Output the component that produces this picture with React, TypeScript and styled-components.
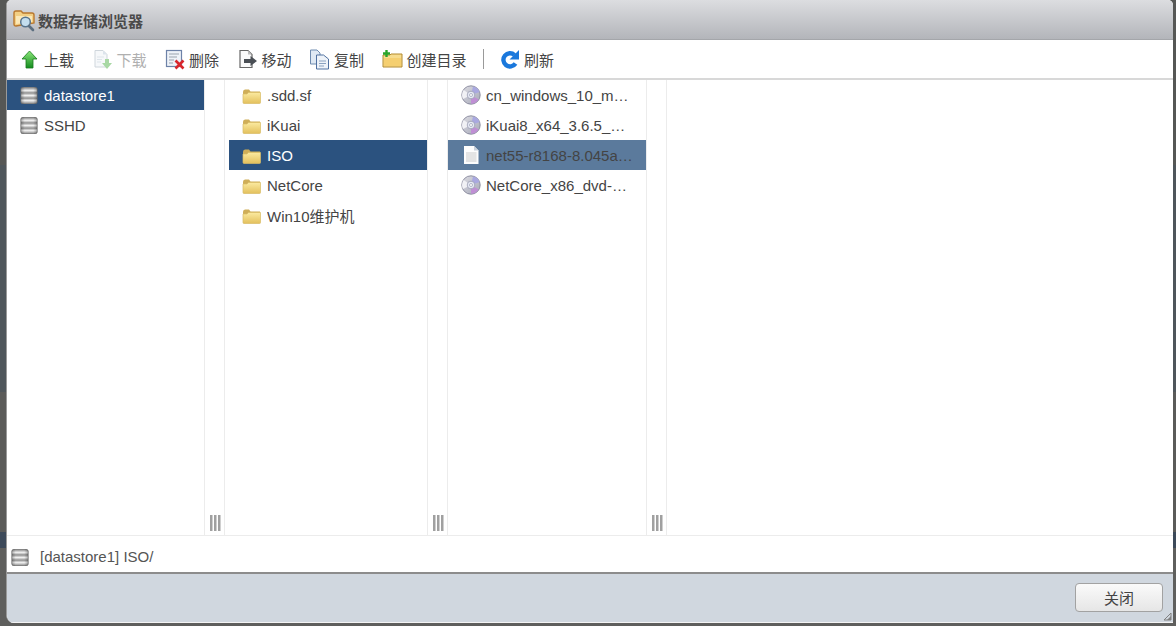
import styled, { createGlobalStyle } from 'styled-components'

const GlobalStyle = createGlobalStyle`
    html, body {
        margin: 0;
        padding: 0;
        height: 100%;
        overflow: hidden;
    }
    body {
        font-family: "Liberation Sans", "Noto Sans CJK SC", sans-serif;
        font-size: 15px;
        color: #444;
        background: linear-gradient(
            to bottom,
            #565755 0, #565755 165px,
            #4f565b 165px, #4f565b 392px,
            #5b5b59 392px, #5b5b59 532px,
            #3d4a5a 532px, #3d4a5a 548px,
            #5f5f5d 548px, #5f5f5d 100%
        );
    }
`

const Page = styled.div`
    box-sizing: border-box;
    height: 626px;
    padding: 0 3px 3px 6px;
    display: flex;
`

const Dialog = styled.div`
    flex: 1;
    min-width: 0;
    display: flex;
    flex-direction: column;
    background: #fff;
    border-left: 1px solid #9a9a9a;
    border-radius: 5px 5px 0 8px;
    overflow: hidden;
`

const Header = styled.div`
    height: 39px;
    flex: none;
    display: flex;
    align-items: center;
    gap: 2px;
    padding-left: 6px;
    background: linear-gradient(to bottom, #dcdde0, #b3b5ba);
    border-bottom: 1px solid #a4a6aa;
`

const Title = styled.span`
    font-size: 15px;
    font-weight: bold;
    color: #4a4a4a;
    position: relative;
    top: 1px;
`

const Toolbar = styled.div`
    height: 38px;
    flex: none;
    display: flex;
    align-items: center;
    gap: 17.5px;
    padding-left: 12px;
    border-bottom: 2px solid #d8d8d8;
`

const Tool = styled.div<{ $disabled?: boolean }>`
    display: flex;
    align-items: center;
    gap: 4px;
    color: ${(p) => (p.$disabled ? '#b0b0b0' : '#444')};
    white-space: nowrap;
`

const ToolIcon = styled.svg`
    width: 21px;
    height: 21px;
    flex: none;
    display: block;
`

const Separator = styled.div`
    width: 1px;
    height: 20px;
    background: #9a9a9a;
    margin: 0 -2px 0 -1.5px;
`

const Browser = styled.div`
    flex: 1;
    min-height: 0;
    display: flex;
    border-bottom: 1px solid #ececec;
`

const Column = styled.div<{ $width: number; $inset?: number }>`
    width: ${(p) => p.$width}px;
    flex: none;
    box-sizing: border-box;
    padding-left: ${(p) => p.$inset ?? 0}px;
`

const Row = styled.div<{ $state?: 'active' | 'muted'; $file?: boolean }>`
    height: 30px;
    display: flex;
    align-items: center;
    gap: 5px;
    padding-left: ${(p) => (p.$file ? 13 : 12)}px;
    padding-right: 12px;
    color: ${(p) => (p.$state === 'active' ? '#fff' : '#444')};
    background: ${(p) =>
        p.$state === 'active' ? '#2b527f' : p.$state === 'muted' ? '#5b7a9c' : 'transparent'};
`

const RowText = styled.span`
    flex: 1;
    min-width: 0;
    overflow: hidden;
    white-space: nowrap;
    text-overflow: ellipsis;
`

const RowIcon = styled.svg`
    width: 20px;
    height: 20px;
    flex: none;
    display: block;
`

const Gutter = styled.div`
    width: 19px;
    flex: none;
    display: flex;
    align-items: flex-end;
    justify-content: center;
    gap: 2px;
    padding-bottom: 4px;
    border-left: 1px solid #ececec;
    border-right: 1px solid #ececec;
`

const GripBar = styled.span`
    width: 2px;
    height: 16px;
    background: #a0a0a0;
    box-shadow: 1px 0 0 #cfcfcf;
`

const Rest = styled.div`
    flex: 1;
`

const PathBar = styled.div`
    height: 36px;
    flex: none;
    box-sizing: border-box;
    padding: 5px 0 0 3px;
    display: flex;
    align-items: center;
    gap: 10px;
    color: #555;
`

const Footer = styled.div`
    height: 47px;
    flex: none;
    position: relative;
    display: flex;
    align-items: center;
    justify-content: flex-end;
    padding: 0 10px 1px 0;
    background: #d0d7df;
    border-top: 2px solid #8c8c8c;
    border-bottom: 1px solid #f4f4f4;
`

const CloseButton = styled.button`
    width: 88px;
    height: 29px;
    box-sizing: border-box;
    font: inherit;
    font-size: 15px;
    color: #444;
    background: linear-gradient(to bottom, #fafafa, #e6e6e6);
    border: 1px solid #a2a2a2;
    border-radius: 4px;
    padding: 0;
`

const ResizeGrip = styled.svg`
    position: absolute;
    right: 1px;
    bottom: 1px;
    width: 9px;
    height: 9px;
`

function DiskIcon() {
    return (
        <RowIcon viewBox="0 0 20 20">
            <defs>
                <linearGradient id="diskBand" x1="0" y1="0" x2="0" y2="1">
                    <stop offset="0" stopColor="#9a9a9a" />
                    <stop offset="0.5" stopColor="#f0f0f0" />
                    <stop offset="1" stopColor="#a0a0a0" />
                </linearGradient>
                <linearGradient id="diskSide" x1="0" y1="0" x2="1" y2="0">
                    <stop offset="0" stopColor="#000" stopOpacity="0.28" />
                    <stop offset="0.25" stopColor="#000" stopOpacity="0" />
                    <stop offset="0.75" stopColor="#000" stopOpacity="0" />
                    <stop offset="1" stopColor="#000" stopOpacity="0.28" />
                </linearGradient>
            </defs>
            <rect x="1.5" y="2" width="17" height="17" rx="2.5" fill="#858585" />
            <rect x="2.2" y="3" width="15.6" height="4.8" rx="1" fill="url(#diskBand)" />
            <rect x="2.2" y="8.1" width="15.6" height="4.8" fill="url(#diskBand)" />
            <rect x="2.2" y="13.2" width="15.6" height="4.8" rx="1" fill="url(#diskBand)" />
            <rect x="1.5" y="2" width="17" height="17" rx="2.5" fill="url(#diskSide)" />
        </RowIcon>
    )
}

function FolderIcon() {
    return (
        <RowIcon viewBox="1 0 20 20">
            <defs>
                <linearGradient id="folderBody" x1="0" y1="0" x2="0" y2="1">
                    <stop offset="0" stopColor="#fbeaa0" />
                    <stop offset="1" stopColor="#e3c05c" />
                </linearGradient>
            </defs>
            <path d="M2 7 Q2 4.5 4 4.5 L8 4.5 L9.5 6.5 L19 6.5 L19 9 L2 9 Z" fill="#cfae58" />
            <path d="M2 9 L6 9 L7.5 7.5 L19.5 7.5 L19.5 17.5 Q19.5 18.5 18.5 18.5 L3 18.5 Q2 18.5 2 17.5 Z" fill="url(#folderBody)" stroke="#d8bb66" strokeWidth="0.7" />
        </RowIcon>
    )
}

function CdIcon() {
    return (
        <RowIcon viewBox="0 0 20 20">
            <defs>
                <linearGradient id="cdRim" x1="0" y1="0" x2="1" y2="1">
                    <stop offset="0" stopColor="#dcdce2" />
                    <stop offset="1" stopColor="#a6a8b8" />
                </linearGradient>
            </defs>
            <circle cx="10" cy="10" r="9.2" fill="url(#cdRim)" stroke="#85869a" strokeWidth="0.9" />
            <path d="M10 10 L2.6 5 A9 9 0 0 0 2 14 Z" fill="#f1f1f5" />
            <path d="M10 10 L12 1.6 A9 9 0 0 1 18.6 7 Z" fill="#a9a8e0" />
            <path d="M10 10 L17.6 14.5 A9 9 0 0 1 10 18.8 Z" fill="#bf8fd4" />
            <circle cx="10" cy="10" r="3.8" fill="#e6e9f4" stroke="#9a9db2" strokeWidth="0.8" />
            <circle cx="10" cy="10" r="1.5" fill="#fff" stroke="#8a8ea8" strokeWidth="0.6" />
        </RowIcon>
    )
}

function FileIcon() {
    return (
        <RowIcon viewBox="0 0 20 20">
            <path d="M3 1 L13 1 L17.5 5.5 L17.5 19 L3 19 Z" fill="#fdfdfd" />
            <path d="M13 1 L17.5 5.5 L13 5.5 Z" fill="#c9d2dc" />
            <rect x="5" y="7" width="10.5" height="10" fill="#e4e4e4" />
        </RowIcon>
    )
}

function TitleIcon() {
    return (
        <svg width="23" height="24" viewBox="0 0 23 24">
            <path d="M1 5 Q1 3 3 3 L8 3 L10 5 L19 5 Q21 5 21 7 L21 15 L3 18 Q1 18 1 16 Z" fill="#f3cf83" stroke="#b9782e" strokeWidth="1.4" />
            <path d="M3 8 L19 8 L19 14 L3 16 Z" fill="#fbe8b8" />
            <circle cx="12.5" cy="14" r="4.8" fill="#c4deee" stroke="#58748c" strokeWidth="1.5" />
            <path d="M16 18 L20 22" stroke="#5c6f80" strokeWidth="2.6" strokeLinecap="round" />
        </svg>
    )
}

function UploadIcon() {
    return (
        <ToolIcon viewBox="0 0 21 21">
            <defs>
                <linearGradient id="upArrow" x1="0" y1="0" x2="0" y2="1">
                    <stop offset="0" stopColor="#8ce87a" />
                    <stop offset="1" stopColor="#138a1e" />
                </linearGradient>
            </defs>
            <path d="M10.5 2 L18 10 L14 10 L14 19 L7 19 L7 10 L3 10 Z" fill="url(#upArrow)" stroke="#177a1c" strokeWidth="0.8" />
        </ToolIcon>
    )
}

function DownloadIcon() {
    return (
        <ToolIcon viewBox="0 0 21 21">
            <path d="M3 1.5 L11 1.5 L15 5.5 L15 18 L3 18 Z" fill="#f6f8fa" stroke="#cfd6dc" />
            <path d="M11 1.5 L15 5.5 L11 5.5 Z" fill="#dbe4ec" />
            <path d="M5 8 H12 M5 10.5 H10 M5 13 H9" stroke="#dde4ea" />
            <path d="M13 10 L17 10 L17 14 L20 14 L15 20 L10 14 L13 14 Z" fill="#a8d8a4" />
        </ToolIcon>
    )
}

function DeleteIcon() {
    return (
        <ToolIcon viewBox="0 0 21 21">
            <rect x="2.5" y="1.5" width="15" height="16" fill="#eef2f8" stroke="#6d82a8" strokeWidth="1.2" />
            <path d="M5 5 H15 M5 8 H13 M5 11 H10 M5 14 H9" stroke="#9aa3ae" />
            <path d="M11.5 11.5 L19.5 19.5 M19.5 11.5 L11.5 19.5" stroke="#d8262c" strokeWidth="2.6" />
        </ToolIcon>
    )
}

function MoveIcon() {
    return (
        <ToolIcon viewBox="0 0 21 21">
            <path d="M3 1.5 L11 1.5 L15 5.5 L15 18.5 L3 18.5 Z" fill="#fafafa" stroke="#666" strokeWidth="1.2" />
            <path d="M11 1.5 L15 5.5 L11 5.5 Z" fill="#bbb" />
            <path d="M7 10 L13.5 10 L13.5 7 L20 12 L13.5 17 L13.5 14 L7 14 Z" fill="#4a4f55" />
        </ToolIcon>
    )
}

function CopyIcon() {
    return (
        <ToolIcon viewBox="0 0 21 21">
            <path d="M1.5 1 L8 1 L11 4 L11 15 L1.5 15 Z" fill="#dfe9f4" stroke="#6f8cb0" />
            <path d="M7.5 6 L14.5 6 L19.5 10 L19.5 20 L7.5 20 Z" fill="#eef3f9" stroke="#4f70a0" />
            <path d="M10 12 H17 M10 14.5 H17 M10 17 H15" stroke="#8aa2c0" />
        </ToolIcon>
    )
}

function NewFolderIcon() {
    return (
        <ToolIcon viewBox="0 0 21 21">
            <path d="M1 6 L8 6 L9 5 L20 5 L20 18 L1 18 Z" fill="#f7dc8e" stroke="#b38a2e" />
            <path d="M2 9 L19 9 L19 17 L2 17 Z" fill="#f5cf70" />
            <path d="M4.5 1 V8 M1 4.5 H8" stroke="#2aa52a" strokeWidth="2.4" />
        </ToolIcon>
    )
}

function RefreshIcon() {
    return (
        <ToolIcon viewBox="0 0 21 21">
            <path d="M15.5 6 A6.6 6.6 0 1 0 16.5 14.5" fill="none" stroke="#1a78dc" strokeWidth="4.4" />
            <path d="M20 1 L20 10.5 L10.5 10.5 Z" fill="#1a78dc" />
        </ToolIcon>
    )
}

function Grip() {
    return (
        <Gutter>
            <GripBar />
            <GripBar />
            <GripBar />
        </Gutter>
    )
}

export default function App() {
    return (
        <>
            <GlobalStyle />
            <Page>
                <Dialog>
                    <Header>
                        <TitleIcon />
                        <Title>数据存储浏览器</Title>
                    </Header>
                    <Toolbar>
                        <Tool><UploadIcon />上载</Tool>
                        <Tool $disabled><DownloadIcon />下载</Tool>
                        <Tool><DeleteIcon />删除</Tool>
                        <Tool><MoveIcon />移动</Tool>
                        <Tool><CopyIcon />复制</Tool>
                        <Tool><NewFolderIcon />创建目录</Tool>
                        <Separator />
                        <Tool><RefreshIcon />刷新</Tool>
                    </Toolbar>
                    <Browser>
                        <Column $width={197}>
                            <Row $state="active"><DiskIcon /><RowText>datastore1</RowText></Row>
                            <Row><DiskIcon /><RowText>SSHD</RowText></Row>
                        </Column>
                        <Grip />
                        <Column $width={202} $inset={4}>
                            <Row $file><FolderIcon /><RowText>.sdd.sf</RowText></Row>
                            <Row $file><FolderIcon /><RowText>iKuai</RowText></Row>
                            <Row $file $state="active"><FolderIcon /><RowText>ISO</RowText></Row>
                            <Row $file><FolderIcon /><RowText>NetCore</RowText></Row>
                            <Row $file><FolderIcon /><RowText>Win10维护机</RowText></Row>
                        </Column>
                        <Grip />
                        <Column $width={198}>
                            <Row $file><CdIcon /><RowText>cn_windows_10_multiple_editions.iso</RowText></Row>
                            <Row $file><CdIcon /><RowText>iKuai8_x64_3.6.5_Build202006.iso</RowText></Row>
                            <Row $file $state="muted"><FileIcon /><RowText>net55-r8168-8.045a-napi.x86_64.vib</RowText></Row>
                            <Row $file><CdIcon /><RowText>NetCore_x86_dvd-WS.iso</RowText></Row>
                        </Column>
                        <Grip />
                        <Rest />
                    </Browser>
                    <PathBar>
                        <DiskIcon />
                        <span>[datastore1] ISO/</span>
                    </PathBar>
                    <Footer>
                        <CloseButton type="button">关闭</CloseButton>
                        <ResizeGrip viewBox="0 0 9 9">
                            <path d="M8 1 L8 8 L1 8 Z" fill="none" stroke="#808080" strokeWidth="1" />
                            <path d="M8 4 L8 8 L4 8 Z" fill="#808080" />
                        </ResizeGrip>
                    </Footer>
                </Dialog>
            </Page>
        </>
    )
}
